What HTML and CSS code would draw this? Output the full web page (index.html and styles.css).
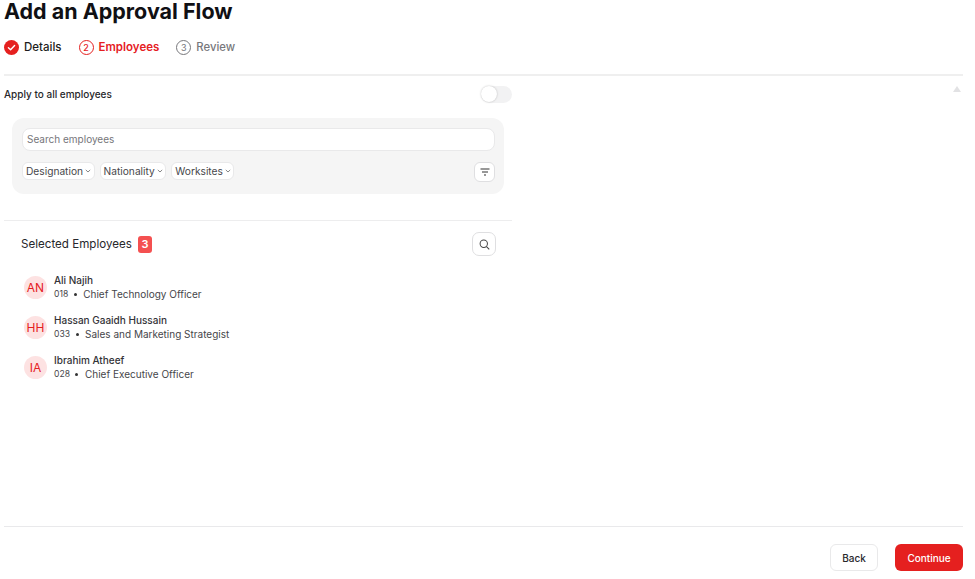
FILE: index.html
```html
<!DOCTYPE html>
<html lang="en">
<head>
<meta charset="utf-8">
<title>Add an Approval Flow</title>
<link rel="stylesheet" href="styles.css">
</head>
<body>
<div class="page">
  <h1 class="title">Add an Approval Flow</h1>
  <ol class="steps">
    <li class="step done">
      <svg class="step-icon" viewBox="0 0 15 15"><circle cx="7.5" cy="7.5" r="7.5" fill="#e5201f"/><path d="M4.4 7.7l2.2 2.1 4-4.2" fill="none" stroke="#fff" stroke-width="1.4" stroke-linecap="round" stroke-linejoin="round"/></svg>
      <span>Details</span>
    </li>
    <li class="step active">
      <span class="step-num">2</span>
      <span>Employees</span>
    </li>
    <li class="step todo">
      <span class="step-num">3</span>
      <span>Review</span>
    </li>
  </ol>
  <div class="main">
    <div class="column">
      <div class="apply-row">
        <span class="apply-label">Apply to all employees</span>
        <span class="toggle"><span class="knob"></span></span>
      </div>
      <div class="filter-card">
        <div class="search-input">Search employees</div>
        <div class="filter-row">
          <div class="chips">
            <span class="chip">Designation<svg class="chev" viewBox="0 0 6 4"><path d="M.8.9L3 3l2.2-2.1" fill="none" stroke="#666" stroke-width=".8"/></svg></span>
            <span class="chip">Nationality<svg class="chev" viewBox="0 0 6 4"><path d="M.8.9L3 3l2.2-2.1" fill="none" stroke="#666" stroke-width=".8"/></svg></span>
            <span class="chip">Worksites<svg class="chev" viewBox="0 0 6 4"><path d="M.8.9L3 3l2.2-2.1" fill="none" stroke="#666" stroke-width=".8"/></svg></span>
          </div>
          <button class="filter-btn" aria-label="Filter"><svg viewBox="0 0 10 8" width="10" height="8"><path d="M.5 1h9M2 4h6M4 7h2" fill="none" stroke="#333" stroke-width="1.1"/></svg></button>
        </div>
      </div>
      <div class="selected">
        <div class="selected-head">
          <div class="selected-title"><span>Selected Employees</span><span class="badge">3</span></div>
          <button class="search-btn" aria-label="Search"><svg viewBox="0 0 12 12" width="11" height="11"><circle cx="5.2" cy="5.2" r="4" fill="none" stroke="#444" stroke-width="1.1"/><path d="M8.2 8.2l3 3" stroke="#444" stroke-width="1.2"/></svg></button>
        </div>
        <ul class="people">
          <li class="person"><span class="avatar">AN</span><div><div class="name">Ali Najih</div><div class="meta"><span class="code">018</span><span class="dot"></span><span>Chief Technology Officer</span></div></div></li>
          <li class="person"><span class="avatar">HH</span><div><div class="name">Hassan Gaaidh Hussain</div><div class="meta"><span class="code">033</span><span class="dot"></span><span>Sales and Marketing Strategist</span></div></div></li>
          <li class="person"><span class="avatar">IA</span><div><div class="name">Ibrahim Atheef</div><div class="meta"><span class="code">028</span><span class="dot"></span><span>Chief Executive Officer</span></div></div></li>
        </ul>
      </div>
    </div>
    <svg class="scroll-up" viewBox="0 0 8 6"><path d="M4 0l4 6H0z" fill="#e2e2e4"/></svg>
  </div>
  <div class="footer">
    <button class="btn back">Back</button>
    <button class="btn continue">Continue</button>
  </div>
</div>
</body>
</html>
```
FILE: styles.css
```css
* { box-sizing: border-box; }
html, body { margin: 0; height: 100%; background: #fff; }
body { font-family: Inter, "Liberation Sans", sans-serif; color: #1d1d20; overflow: hidden; }
.page { width: 975px; height: 579px; padding: 0 12px 0 4px; display: flex; flex-direction: column; }
.title { margin: 0; font-size: 21.5px; line-height: 22px; font-weight: 700; color: #101014; }
.steps { list-style: none; margin: 18px 0 0; padding: 0; display: flex; gap: 17px; border-bottom: 2px solid #efefef; height: 36px; align-items: flex-start; }
.step { display: flex; align-items: center; gap: 5px; font-size: 11.5px; line-height: 15px; font-weight: 500; }
.step-icon { width: 15px; height: 15px; }
.step-num { width: 15px; height: 15px; border-radius: 50%; border: 1.2px solid currentColor; display: flex; align-items: center; justify-content: center; font-size: 9px; font-weight: 400; }
.step.active { color: #e5201f; font-weight: 600; }
.step.active .step-num { border-width: 1.5px; font-weight: 500; }
.step.todo { color: #77777b; font-size: 11.3px; }
.main { flex: 1; display: flex; justify-content: space-between; min-height: 0; border-bottom: 1px solid #e9e9eb; }
.column { width: 508px; }
.apply-row { display: flex; justify-content: space-between; align-items: center; height: 36px; }
.apply-label { font-size: 10px; font-weight: 500; color: #27272b; }
.toggle { width: 31px; height: 17px; border-radius: 9px; background: #f2f2f3; display: block; }
.knob { display: block; width: 16px; height: 16px; border-radius: 50%; background: #fff; box-shadow: 0 0 2px rgba(0,0,0,.25); }
.filter-card { margin: 6px 8px 0; height: 76px; background: #f5f5f5; border-radius: 12px; padding: 10px 9px 0 10px; }
.search-input { height: 23px; background: #fff; border: 1px solid #e9e9ea; border-radius: 8px; font-size: 10px; line-height: 21px; padding-left: 4px; color: #76767a; }
.filter-row { display: flex; justify-content: space-between; align-items: flex-start; margin-top: 11px; }
.chips { display: flex; gap: 5px; align-items: flex-start; }
.chip { display: flex; align-items: center; gap: 2px; height: 18px; padding: 0 2.5px 0 3px; background: #fff; border: 1px solid #e9e9ea; border-radius: 6px; font-size: 10.2px; color: #46464a; }
.chev { width: 6px; height: 4px; }
.filter-btn { width: 21px; height: 20px; padding: 0; background: #fff; border: 1px solid #dfdfe1; border-radius: 6px; display: flex; align-items: center; justify-content: center; }
.selected { margin-top: 26px; border-top: 1px solid #ededee; padding: 11px 16px 0 17px; }
.selected-head { display: flex; justify-content: space-between; align-items: center; height: 24px; }
.selected-title { display: flex; align-items: center; gap: 6px; font-size: 11.6px; font-weight: 400; color: #27272b; }
.badge { width: 14px; height: 17px; border-radius: 3px; background: #f45050; color: #fff; font-size: 11px; font-weight: 600; display: flex; align-items: center; justify-content: center; }
.search-btn { width: 24px; height: 24px; padding: 0; background: #fff; border: 1px solid #dfdfe1; border-radius: 7px; display: flex; align-items: center; justify-content: center; }
.people { list-style: none; margin: 17px 0 0; padding: 0 0 0 3px; display: flex; flex-direction: column; gap: 12px; }
.person { display: flex; align-items: center; gap: 7px; height: 28px; }
.avatar { width: 23px; height: 23px; border-radius: 50%; background: #fde2e2; color: #e5201f; font-size: 12px; display: flex; align-items: center; justify-content: center; }
.name { font-size: 10px; line-height: 14px; font-weight: 500; color: #333337; }
.meta { display: flex; align-items: center; font-size: 10px; line-height: 14px; color: #46464a; }
.code { font-size: 8.6px; }
.dot { width: 3px; height: 3px; border-radius: 50%; background: #333; margin: 0 6.5px 0 5.5px; }
.scroll-up { width: 8px; height: 6px; margin: 10px 2px 0 0; }
.footer { height: 52px; display: flex; justify-content: flex-end; align-items: flex-start; gap: 17px; padding-top: 17px; }
.btn { height: 27px; border-radius: 6px; font-family: inherit; font-size: 10px; font-weight: 500; padding: 0; }
.back { width: 48px; background: #fff; border: 1px solid #e9e9ea; color: #27272b; }
.continue { width: 68px; background: #e5201f; border: 0; color: #fff; }
```
